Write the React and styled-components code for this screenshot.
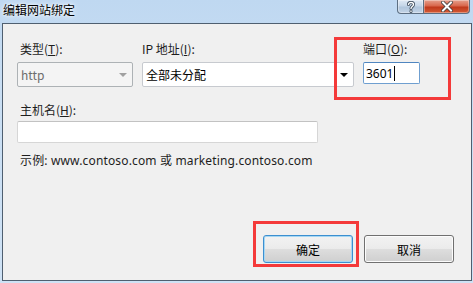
import React from "react";
import styled, { createGlobalStyle } from "styled-components";

const GlobalStyle = createGlobalStyle`
  html, body {
    margin: 0;
    padding: 0;
    background: #c6dcf2;
  }
  body {
    font-family: "Segoe UI", "Noto Sans", "Noto Sans CJK SC", sans-serif;
    font-size: 12px;
    color: #000;
  }
`;

// WINDOW FRAME
const Window = styled.div`
  width: 473px;
  height: 283px;
  display: flex;
  flex-direction: column;
  background: linear-gradient(180deg, #bfd8f1 0%, #c9def3 30%, #cfe2f5 100%);
  box-sizing: border-box;
  padding: 0 1px 2px 2px;
  overflow: hidden;
`;

const TitleBar = styled.div`
  height: 23px;
  display: flex;
  justify-content: space-between;
  align-items: flex-start;
  flex-shrink: 0;
`;

const Title = styled.div`
  padding: 1px 0 0 1px;
  font-family: "Noto Sans CJK SC", sans-serif;
  font-size: 12px;
  line-height: 17px;
  color: #000;
  text-shadow: 0 0 6px #fff, 0 0 3px #fff;
`;

const Captions = styled.div`
  display: flex;
  margin-right: 2px;
`;

const CaptionButton = styled.div`
  width: ${(p) => p.$w}px;
  height: 14px;
  display: flex;
  align-items: center;
  justify-content: center;
  box-sizing: border-box;
  border: 1px solid #5d6f82;
  border-top: none;
  background: ${(p) =>
    p.$close
      ? "linear-gradient(180deg, #e6a08d 0%, #d8674c 45%, #c0391c 55%, #d45b35 100%)"
      : "linear-gradient(180deg, #dfe9f4 0%, #c5d6e8 45%, #b1c6dc 55%, #c2d3e6 100%)"};
  border-radius: ${(p) => (p.$close ? "0 0 4px 0" : "0 0 0 4px")};
  border-left: ${(p) => (p.$close ? "none" : "1px solid #5d6f82")};
  box-shadow: inset 0 0 0 1px rgba(255, 255, 255, 0.35);
`;

// DIALOG BODY
const Body = styled.div`
  flex: 1;
  display: flex;
  flex-direction: column;
  background: #f0f0f0;
  border: 1px solid #4f5f70;
  padding: 17px 17px 17px 14px;
  box-sizing: border-box;
`;

const TopRow = styled.div`
  display: grid;
  grid-template-columns: 116px 212px 57px;
  column-gap: 9px;
`;

const Field = styled.div`
  position: relative;
  display: flex;
  flex-direction: column;
  gap: ${(p) => p.$gap ?? 5}px;
`;

const Label = styled.div`
  font-family: "Noto Sans CJK SC", sans-serif;
  line-height: 16px;
  padding-left: ${(p) => p.$indent ?? 0}px;
  color: #1e1e1e;
  u {
    text-decoration: underline;
    text-underline-offset: 1px;
  }
`;

const Combo = styled.div`
  height: 25px;
  box-sizing: border-box;
  display: flex;
  align-items: center;
  justify-content: space-between;
  border: 1px solid ${(p) => (p.$disabled ? "#adb2b5" : "#c7cacf")};
  border-radius: 2px;
  background: ${(p) => (p.$disabled ? "#f4f4f4" : "#fff")};
  color: ${(p) => (p.$disabled ? "#6d6d6d" : "#000")};
  padding: 0 5px 0 3px;
  font-family: "Noto Sans CJK SC", sans-serif;
`;

const Arrow = styled.span`
  width: 0;
  height: 0;
  border-left: 4px solid transparent;
  border-right: 4px solid transparent;
  border-top: 4px solid ${(p) => (p.$disabled ? "#a0a0a0" : "#000")};
  margin-top: 1px;
`;

const TextBox = styled.div`
  height: 22px;
  width: ${(p) => (p.$w ? `${p.$w}px` : "auto")};
  box-sizing: border-box;
  display: flex;
  align-items: center;
  border: 1px solid ${(p) => (p.$focus ? "#6f9fd0" : "#d6d6d6")};
  border-top-color: ${(p) => (p.$focus ? "#4f86c0" : "#c2c2c2")};
  border-radius: 2px;
  background: #fff;
  padding: 0 2px;
`;

const Caret = styled.span`
  width: 1px;
  height: 15px;
  background: #000;
  margin-left: 1px;
`;

const HostRow = styled.div`
  margin-top: 15px;
`;

const Example = styled.div`
  margin-top: 10px;
  padding-left: 3px;
  line-height: 16px;
  letter-spacing: 0.15px;
  font-family: "Segoe UI", "Noto Sans", "Noto Sans CJK SC", sans-serif;
  color: #1e1e1e;
`;

const ButtonBar = styled.div`
  margin-top: auto;
  display: flex;
  justify-content: flex-end;
  gap: 11px;
`;

const ButtonWrap = styled.div`
  position: relative;
`;

const Button = styled.button`
  width: 90px;
  height: 28px;
  box-sizing: border-box;
  border-radius: 3px;
  border: 1px solid ${(p) => (p.$default ? "#3c8fd0" : "#707070")};
  background: linear-gradient(180deg, #f2f2f2 0%, #ebebeb 48%, #dddddd 52%, #cfcfcf 100%);
  box-shadow: inset 0 0 0 1px ${(p) => (p.$default ? "#a6d7f3" : "#fcfcfc")};
  font-family: "Noto Sans CJK SC", sans-serif;
  font-size: 12px;
  color: #000;
  padding: 0;
`;

// RED ANNOTATION FRAMES
const Mark = styled.div`
  position: absolute;
  left: ${(p) => p.$l}px;
  top: ${(p) => p.$t}px;
  width: ${(p) => p.$w}px;
  height: ${(p) => p.$h}px;
  box-sizing: border-box;
  border: 3px solid #f43a3a;
  pointer-events: none;
`;

const Glyph = () => (
  <svg width="12" height="11" viewBox="0 0 12 11">
    <path
      d="M2 1.5 L10 9.5 M10 1.5 L2 9.5"
      stroke="#3b3b3b"
      strokeWidth="3.6"
      strokeLinecap="square"
    />
    <path
      d="M2 1.5 L10 9.5 M10 1.5 L2 9.5"
      stroke="#fff"
      strokeWidth="2"
      strokeLinecap="square"
    />
  </svg>
);

const Help = () => (
  <svg width="8" height="12" viewBox="0 0 8 12">
    <path
      d="M1.5 3.5 C1.5 0.8 6.5 0.8 6.5 3.5 C6.5 5.5 4 5.5 4 7.5 M4 10 L4 10.5"
      stroke="#3b4a5a"
      strokeWidth="3"
      fill="none"
      strokeLinecap="round"
    />
    <path
      d="M1.5 3.5 C1.5 0.8 6.5 0.8 6.5 3.5 C6.5 5.5 4 5.5 4 7.5 M4 10 L4 10.5"
      stroke="#fff"
      strokeWidth="1.4"
      fill="none"
      strokeLinecap="round"
    />
  </svg>
);

const App = () => {
  return (
    <>
      <GlobalStyle />
      <Window>
        <TitleBar>
          <Title>编辑网站绑定</Title>
          <Captions>
            <CaptionButton $w={27}>
              <Help />
            </CaptionButton>
            <CaptionButton $w={46} $close>
              <Glyph />
            </CaptionButton>
          </Captions>
        </TitleBar>
        <Body>
          <TopRow>
            <Field>
              <Label $indent={3}>
                类型(<u>T</u>):
              </Label>
              <Combo $disabled>
                <span>http</span>
                <Arrow $disabled />
              </Combo>
            </Field>
            <Field>
              <Label $indent={0}>
                IP 地址(<u>I</u>):
              </Label>
              <Combo>
                <span>全部未分配</span>
                <Arrow />
              </Combo>
            </Field>
            <Field>
              <Label $indent={0}>
                端口(<u>O</u>):
              </Label>
              <TextBox $focus>
                3601
                <Caret />
              </TextBox>
              <Mark $l={-29} $t={-4} $w={117} $h={63} />
            </Field>
          </TopRow>
          <HostRow>
            <Field $gap={3}>
              <Label $indent={3}>
                主机名(<u>H</u>):
              </Label>
              <TextBox $w={301} />
            </Field>
          </HostRow>
          <Example>示例: www.contoso.com 或 marketing.contoso.com</Example>
          <ButtonBar>
            <ButtonWrap>
              <Button $default>确定</Button>
              <Mark $l={-10} $t={-14} $w={106} $h={46} />
            </ButtonWrap>
            <ButtonWrap>
              <Button>取消</Button>
            </ButtonWrap>
          </ButtonBar>
        </Body>
      </Window>
    </>
  );
};

export default App;
